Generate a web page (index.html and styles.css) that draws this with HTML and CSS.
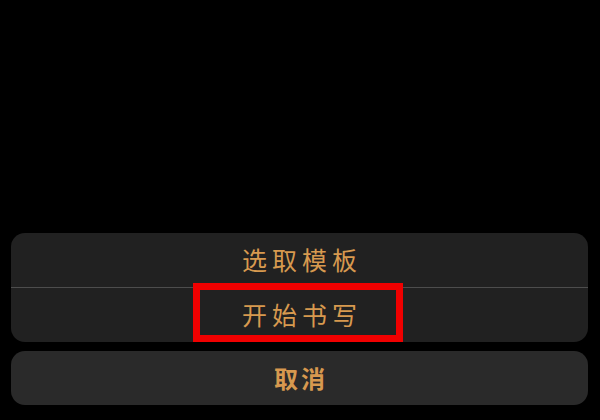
FILE: index.html
```html
<!DOCTYPE html>
<html lang="zh">
<head>
    <meta charset="UTF-8">
    <meta name="viewport" content="width=device-width, initial-scale=1.0">
    <title>操作菜单</title>
    <link rel="stylesheet" href="styles.css">
</head>
<body>
    <div class="sheet">
        <div class="group">
            <button type="button" class="action">选取模板</button>
            <button type="button" class="action highlight">开始书写</button>
        </div>
        <button type="button" class="action cancel">取消</button>
    </div>
</body>
</html>
```

FILE: styles.css
```css
html, body {
    margin: 0;
    height: 100%;
    background: #000;
}
body {
    font-family: "Noto Sans CJK SC", "Noto Sans", sans-serif;
    display: flex;
    flex-direction: column;
    justify-content: flex-end;
}
.sheet {
    display: flex;
    flex-direction: column;
    gap: 9px;
    padding: 0 12px 15px 11px;
}
.group {
    display: flex;
    flex-direction: column;
    background: #212121;
    border-radius: 14px;
}
.action {
    position: relative;
    height: 54px;
    border: none;
    background: transparent;
    color: #d7994f;
    font-family: inherit;
    font-size: 25px;
    font-weight: normal;
    letter-spacing: 5px;
    padding: 0 0 2px 5px;
    cursor: pointer;
}
.group .action + .action {
    border-top: 1px solid #4d4d4d;
    height: 55px;
}
.highlight::after {
    content: "";
    position: absolute;
    left: 182px;
    top: -5px;
    width: 196px;
    height: 45px;
    border: 7px solid #f00000;
}
.cancel {
    background: #2a2a2a;
    border-radius: 14px;
    font-size: 24px;
    font-weight: bold;
    letter-spacing: 3px;
    padding-left: 3px;
}
```
